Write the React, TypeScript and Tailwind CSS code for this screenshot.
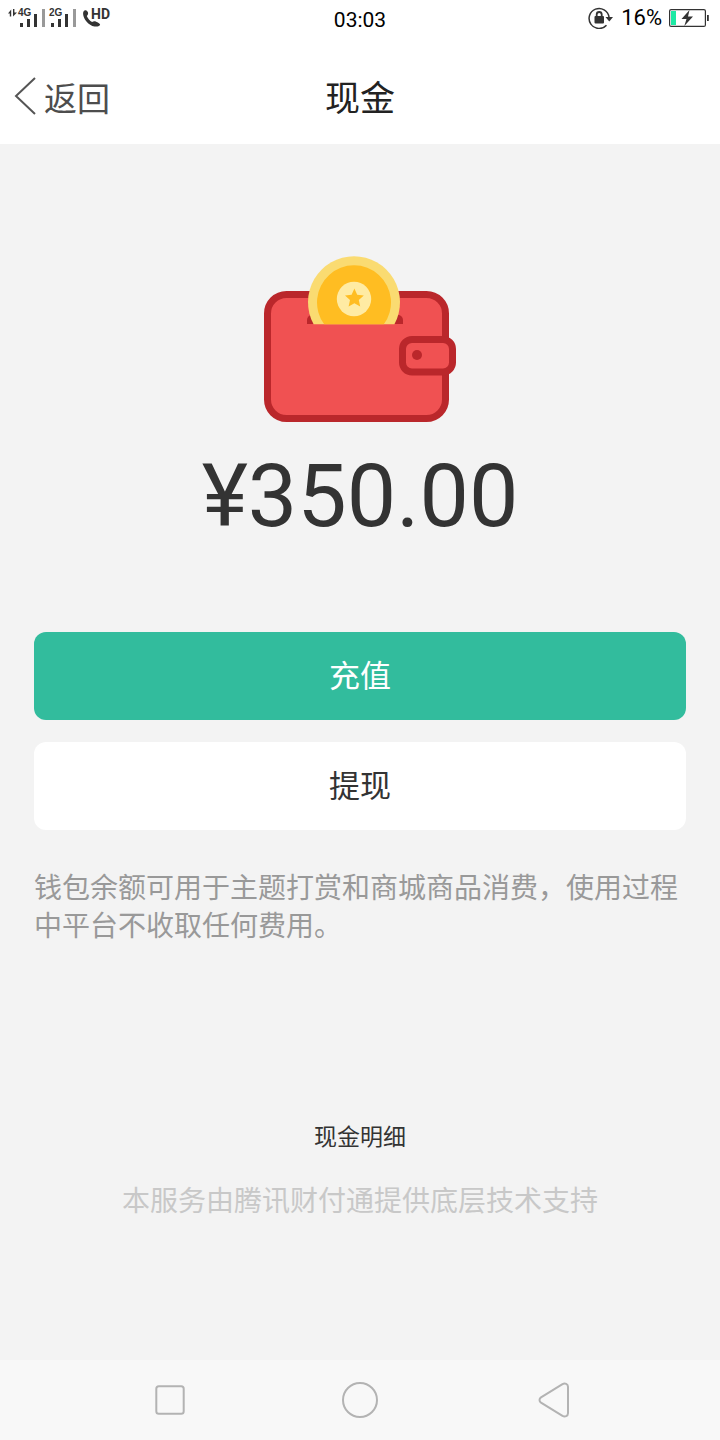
function WalletIcon() {
  return (
    <svg viewBox="0 0 192 166" className="h-[166px] w-48" fill="none" aria-hidden="true">
      <rect x="3.5" y="38.5" width="178" height="124" rx="19" fill="#f05152" stroke="#ba272b" strokeWidth="7" />
      <path d="M43 68v-4a5 5 0 0 1 5-5h86a5 5 0 0 1 5 5v4Z" fill="#ba272b" />
      <path d="M49.6 68.3a46 46 0 1 1 80.8 0Z" fill="#fadb71" />
      <path d="M60.2 68.3a37 37 0 1 1 59.6 0Z" fill="#ffbd22" />
      <circle cx="90" cy="43" r="17.2" fill="#ffeba3" />
      <path
        d="m90.4 32.6 2.8 6.2 6.6.7-5 4.5 1.4 6.6-5.8-3.3-5.8 3.3 1.4-6.600-5-4.500 6.600-.7Z"
        fill="#ffbd22"
      />
      <rect x="138.5" y="83.5" width="50" height="32.5" rx="9.5" fill="#f05152" stroke="#ba272b" strokeWidth="7" />
      <circle cx="153" cy="99" r="5" fill="#ba272b" />
    </svg>
  );
}

function SignalIcon() {
  return (
    <svg viewBox="0 0 112 40" className="h-10 w-28" aria-label="4G 2G HD" role="img">
      <g fill="#333">
        <path d="M8 13.500 11.200 9.500v7H9.800v-3ZM13 9h1.400v3.500H17L13 16.500Z" />
        <path d="M20 23h3v4h-3ZM27 19h3v8h-3ZM34 14h3v13h-3ZM51 23h3v4h-3ZM58 19h3v8h-3ZM65 14h3v13h-3Z" />
        <path d="M84.5 10.500c1.500-1 3 .2 3.500 2 .4 1.500-.3 2.500-1.200 3.400 1 2.500 3 4.700 5.300 6.200 1.200-.9 2.500-1.200 4-.4 1.700.8 3.700 1.600 4 2.700.2 1.200-2.500 2.600-5.600 2.100-6-1-11-7.500-11.400-12.500-.1-1.700.5-3 1.400-3.500Z" />
        <g fontWeight="700">
          <text x="18" y="16" fontSize="10" fontFamily="Liberation Sans, sans-serif">4G</text>
          <text x="49" y="16" fontSize="10" fontFamily="Liberation Sans, sans-serif">2G</text>
          <text x="91" y="19" fontSize="14" fontFamily="Roboto, sans-serif">HD</text>
        </g>
      </g>
      <path d="M42 9h3v18h-3ZM73 9h3v18h-3Z" fill="#999" />
    </svg>
  );
}

function RotationLockIcon() {
  return (
    <svg viewBox="0 0 26 22" className="h-[22px] w-[26px]" fill="none" aria-hidden="true">
      <path d="M18.5 18.2A10 10 0 1 1 21 10" stroke="#333" strokeWidth="1.5" />
      <path d="M17.500 10H25l-3.700 4.500Z" fill="#333" />
      <rect x="6.500" y="9" width="9.500" height="7.500" rx="1" fill="#333" />
      <path d="M8.700 10V7.500a2.500 2.500 0 0 1 5 0V10" stroke="#333" strokeWidth="1.800" />
    </svg>
  );
}

function BatteryIcon() {
  return (
    <svg viewBox="0 0 40 18" className="h-[18px] w-10" fill="none" aria-hidden="true">
      <rect x=".6" y=".6" width="35.8" height="16.8" rx="1.5" stroke="#333" strokeWidth="1.2" />
      <path d="M2 2h5v14H2Z" fill="#1de9a4" />
      <path d="M38 6h1.800v6H38Z" fill="#333" />
      <path d="m20.500 1-8 9h5l-2.200 7 8.700-9.500h-5Z" fill="#333" />
    </svg>
  );
}

function StatusBar() {
  return (
    <div className="grid h-10 grid-cols-[1fr_auto_1fr] items-center text-[22px] text-black">
      <SignalIcon />
      <span className="text-[21px] leading-10">03:03</span>
      <div className="flex items-center justify-end gap-[7px] pr-[11px] pb-1">
        <RotationLockIcon />
        <span className="leading-6">16%</span>
        <BatteryIcon />
      </div>
    </div>
  );
}

function TitleBar() {
  return (
    <header className="grid h-[104px] grid-cols-3 items-center px-3 pt-4 text-[#222]">
      <a href="#back" className="flex items-center gap-2 text-[33px] text-[#4d4d4d]">
        <svg viewBox="0 0 24 48" className="h-12 w-6" fill="none" aria-hidden="true">
          <path d="M23 2 4 20l19 18" stroke="#555" strokeWidth="2" />
        </svg>
        返回
      </a>
      <h1 className="text-center text-[35px]">现金</h1>
    </header>
  );
}

function NavBar() {
  return (
    <nav className="flex h-20 items-center justify-between bg-[#f8f8f8] px-[150px]">
      <button type="button" aria-label="最近任务">
        <svg viewBox="0 0 40 40" className="size-10" fill="none" stroke="#b3b3b3" strokeWidth="2">
          <rect x="6.3" y="6.3" width="27.4" height="27.4" rx="2.5" />
        </svg>
      </button>
      <button type="button" aria-label="主屏幕">
        <svg viewBox="0 0 40 40" className="size-10" fill="none" stroke="#b3b3b3" strokeWidth="2">
          <circle cx="20" cy="20" r="17" />
        </svg>
      </button>
      <button type="button" aria-label="返回">
        <svg viewBox="0 0 40 40" className="size-10" fill="none" stroke="#b3b3b3" strokeWidth="2">
          <path d="M11 17.300 32.500 4.200c2.500-1.400 5.500-.2 5.500 2.500v26.600c0 2.700-3 3.900-5.500 2.500L11 22.700c-2-1.300-2-4.100 0-5.400Z" />
        </svg>
      </button>
    </nav>
  );
}

export default function App() {
  return (
    <div className="flex min-h-screen flex-col bg-[#f3f3f3] font-['Roboto','Noto_Sans_CJK_SC',sans-serif]">
      <div className="bg-white">
        <StatusBar />
        <TitleBar />
      </div>

      <main className="flex flex-1 flex-col px-[34px] pt-28">
        <div className="flex flex-col items-center gap-5">
          <WalletIcon />
          <p className="text-[88px] leading-[108px] text-[#333]">¥350.00</p>
        </div>

        <div className="mt-[82px] flex flex-col gap-[22px] text-[31px]">
          <button type="button" className="h-[88px] rounded-xl bg-[#32bc9d] pt-[2px] text-white">
            充值
          </button>
          <button type="button" className="h-[88px] rounded-xl bg-white pt-[2px] text-[#333]">
            提现
          </button>
        </div>

        <p className="mt-10 text-[28px] leading-[38px] text-[#999]">
          钱包余额可用于主题打赏和商城商品消费，使用过程中平台不收取任何费用。
        </p>

        <div className="mt-auto flex flex-col items-center gap-7 pb-[138px]">
          <a href="#details" className="text-[23px] leading-8 text-[#333]">
            现金明细
          </a>
          <p className="text-[28px] leading-10 text-[#c8c8c8]">本服务由腾讯财付通提供底层技术支持</p>
        </div>
      </main>

      <NavBar />
    </div>
  );
}
